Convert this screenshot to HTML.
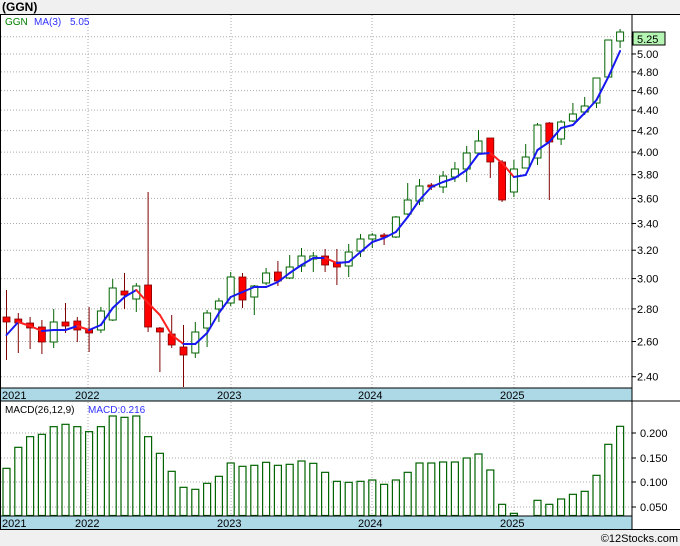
<!DOCTYPE html>
<html><head><meta charset="utf-8"><style>
body{margin:0;width:680px;height:546px;background:#f0f0f0;overflow:hidden;font-family:"Liberation Sans",sans-serif}
svg{position:absolute;left:0;top:0}
</style></head><body>
<svg id="s" width="680" height="546" xmlns="http://www.w3.org/2000/svg" font-family="Liberation Sans, sans-serif">
<rect x="0" y="14" width="680" height="516" fill="#fff"/>
<text x="2" y="11" font-size="12" font-weight="bold" fill="#000">(GGN)</text>
<g id="g"></g>
<rect x="0" y="388" width="632" height="13" fill="#add8e6"/>
<rect x="0" y="516" width="632" height="13" fill="#add8e6"/>
<line x1="0" y1="401" x2="680" y2="401" stroke="#000"/>
<line x1="0" y1="388" x2="632" y2="388" stroke="#000"/>
<line x1="0" y1="516" x2="632" y2="516" stroke="#000"/>
<line x1="632" y1="14" x2="632" y2="530" stroke="#000"/>
<line x1="0" y1="14.5" x2="680" y2="14.5" stroke="#000"/>
<line x1="0" y1="529.5" x2="680" y2="529.5" stroke="#000"/>
<line x1="0.5" y1="14" x2="0.5" y2="530" stroke="#000"/>
<g font-size="11" fill="#000">
<text x="2" y="399">2021</text><text x="75" y="399">2022</text><text x="217" y="399">2023</text><text x="358" y="399">2024</text><text x="500" y="399">2025</text>
<text x="2" y="527">2021</text><text x="75" y="527">2022</text><text x="217" y="527">2023</text><text x="358" y="527">2024</text><text x="500" y="527">2025</text>
</g>
<text x="5" y="25" font-size="10" fill="#008000">GGN</text>
<text x="34" y="25" font-size="10" fill="#3030ff">MA(3)</text>
<text x="70" y="25" font-size="10" fill="#3030ff">5.05</text>
<text x="5" y="413" font-size="10" fill="#000">MACD(26,12,9)</text>
<text x="88" y="413" font-size="10" fill="#3030ff">MACD:0.216</text>
<rect x="633" y="32" width="32" height="13" fill="#b4f5b4" stroke="#000"/>
<text x="637" y="43" font-size="11" fill="#000">5.25</text>
<text x="678" y="542" font-size="11" fill="#000" text-anchor="end">©12Stocks.com</text>
</svg>
<script>
var g=document.getElementById('g'),h='';
function Y(p){return 376.7-439.7*Math.log(p/2.4);}
[88,231,372,514].forEach(function(x){h+='<line x1="'+x+'" y1="15" x2="'+x+'" y2="529" stroke="#aaa" stroke-dasharray="1,2"/>';});
for(var i=0;i<=14;i++){var p=2.4+0.2*i,y=Y(p);h+='<line x1="1" y1="'+y+'" x2="632" y2="'+y+'" stroke="#aaa" stroke-dasharray="1,2"/><line x1="632" y1="'+y+'" x2="636" y2="'+y+'" stroke="#000"/>';
if(i<14)h+='<text x="637" y="'+(y+4)+'" font-size="11">'+p.toFixed(2)+'</text>';}
[[433,'0.200'],[458,'0.150'],[482,'0.100'],[507,'0.050']].forEach(function(a){h+='<line x1="1" y1="'+a[0]+'" x2="632" y2="'+a[0]+'" stroke="#aaa" stroke-dasharray="1,2"/><line x1="632" y1="'+a[0]+'" x2="636" y2="'+a[0]+'" stroke="#000"/><text x="640" y="'+(a[0]+4)+'" font-size="11">'+a[1]+'</text>';});
var C=[['r',317,322,290,360],['r',319,323,313,353],['r',323,328,317,349],['r',327,342,320,354],['g',322,342,309,348],['r',322,326,303,333],['r',321,330,317,342],['r',329,333,307,352],['g',311,330,307,333],['g',288,320,279,321],['r',291,295,273,309],['g',286,299,283,312],['r',285,327,192,332],['r',328,332,327,372],['r',334,345,315,348],['r',347,355,325,387],['g',332,353,322,358],['g',313,328,310,347],['g',301,309,298,322],['g',277,303,272,306],['r',277,300,273,308],['g',286,297,285,315],['g',273,283,268,285],['r',272,281,261,286],['g',267,278,255,279],['g',256,266,248,272],['g',256,259,252,272],['r',256,265,249,272],['r',262,267,249,285],['g',252,266,244,277],['g',239,251,234,257],['g',235,239,233,248],['r',235,237,233,245],['g',217,237,216,238],['g',200,214,183,215],['g',186,201,179,205],['r',185,187,183,190],['g',176,187,171,193],['g',169,177,162,182],['g',153,169,146,182],['g',141,153,130,154],['r',138,162,138,178],['r',162,200,160,202],['g',169,192,160,197],['g',157,168,144,168],['g',125,158,123,165],['r',123,142,122,200],['g',122,139,120,145],['g',114,121,103,122],['g',106,112,97,115],['g',78,103,78,108],['g',40,77,40,78],['g',32,41,29,48]];
var M=[265,202,170,163,140,133,140,155,140,108,112,108,170,220,274,322,328,310,289,249,259,256,247,256,253,243,250,277,304,307,304,300,313,300,277,249,249,246,246,234,222,270,373,400,null,361,373,357,343,334,286,193,139];
var MA=[335,322,326,331,330,330,326,330,325,308,297,290,303,315,335,344,344,333,313,297,292,287,287,282,273,265,258,258,263,262,252,242,238,232,217,200,187,182,178,170,154,153,163,177,175,150,142,128,125,113,100,77,51];
function X(i){return 6.5+i*11.8;}
C.forEach(function(c,i){var x=X(i),col=c[0]=='r'?'#800000':'#006400';
h+='<line x1="'+x+'" y1="'+c[3]+'" x2="'+x+'" y2="'+c[4]+'" stroke="'+col+'"/>';
if(c[0]=='r')h+='<rect x="'+(x-3.5)+'" y="'+c[1]+'" width="7" height="'+Math.max(2,c[2]-c[1])+'" fill="#f00" stroke="#800000" stroke-width="0.8"/>';
else h+='<rect x="'+(x-3.5)+'" y="'+c[1]+'" width="7" height="'+Math.max(2,c[2]-c[1])+'" fill="#fff" stroke="#006400"/>';});
for(var i=1;i<MA.length;i++){var col=MA[i]>MA[i-1]?'#ff2020':'#1818f0';h+='<line x1="'+X(i-1)+'" y1="'+MA[i-1]+'" x2="'+X(i)+'" y2="'+MA[i]+'" stroke="'+col+'" stroke-width="2" stroke-linecap="round"/>';}
M.forEach(function(v,i){if(v===null)return;var y=380+v/3;h+='<rect x="'+(X(i)-3.5)+'" y="'+y+'" width="7" height="'+(515.5-y)+'" fill="none" stroke="#006400" stroke-width="1.2"/>';});
g.innerHTML=h;
</script>
</body></html>
